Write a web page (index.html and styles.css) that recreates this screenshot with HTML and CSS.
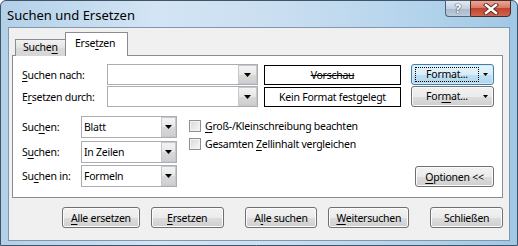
FILE: index.html
```html
<!DOCTYPE html>
<html lang="de">
<head>
    <meta charset="UTF-8">
    <title>Suchen und Ersetzen</title>
    <link rel="stylesheet" href="styles.css">
</head>
<body>
    <div class="window">
        <div class="titlebar">
            <span class="title">Suchen und Ersetzen</span>
            <div class="caption">
                <span class="cap-help">?</span>
                <span class="cap-close">
                    <svg width="16" height="12" viewBox="0 0 16 12">
                        <path d="M3 2 L13 10 M13 2 L3 10" stroke="#5a2a22" stroke-width="4.2" stroke-linecap="square"/>
                        <path d="M3 2 L13 10 M13 2 L3 10" stroke="#fff" stroke-width="2.4" stroke-linecap="square"/>
                    </svg>
                </span>
            </div>
        </div>

        <div class="client">
            <div class="tabs">
                <div class="tab">Suche<u>n</u></div>
                <div class="tab active">Erse<u>t</u>zen</div>
            </div>

            <div class="panel">
                <!-- search / replace rows -->
                <div class="top-grid">
                    <label class="lbl"><u>S</u>uchen nach:</label>
                    <div class="combo">
                        <span class="combo-text"></span>
                        <span class="combo-btn"><svg width="7" height="4" viewBox="0 0 7 4"><polygon points="0,0 7,0 3.5,4" fill="#000"/></svg></span>
                    </div>
                    <div class="preview"><s>Vorschau</s></div>
                    <button class="btn split focused"><span class="focus-rect">Format...</span><svg class="arrow" width="5" height="3" viewBox="0 0 5 3"><polygon points="0,0 5,0 2.5,3" fill="#000"/></svg></button>

                    <label class="lbl">E<u>r</u>setzen durch:</label>
                    <div class="combo">
                        <span class="combo-text"></span>
                        <span class="combo-btn"><svg width="7" height="4" viewBox="0 0 7 4"><polygon points="0,0 7,0 3.5,4" fill="#000"/></svg></span>
                    </div>
                    <div class="preview">Kein Format festgelegt</div>
                    <button class="btn split"><span class="focus-rect plain">For<u>m</u>at...</span><svg class="arrow" width="5" height="3" viewBox="0 0 5 3"><polygon points="0,0 5,0 2.5,3" fill="#000"/></svg></button>
                </div>

                <!-- options -->
                <div class="lower">
                    <label class="lbl">Suc<u>h</u>en:</label>
                    <div class="select">
                        <span class="select-text">Blatt</span>
                        <span class="select-btn"><svg width="7" height="4" viewBox="0 0 7 4"><polygon points="0,0 7,0 3.5,4" fill="#000"/></svg></span>
                    </div>

                    <div class="checks">
                        <div class="check"><span class="box"></span><span><u>G</u>roß-/Kleinschreibung beachten</span></div>
                        <div class="check"><span class="box"></span><span>Gesamten <u>Z</u>ellinhalt vergleichen</span></div>
                    </div>

                    <button class="btn options"><u>O</u>ptionen &lt;&lt;</button>

                    <label class="lbl">S<u>u</u>chen:</label>
                    <div class="select">
                        <span class="select-text">In Zeilen</span>
                        <span class="select-btn"><svg width="7" height="4" viewBox="0 0 7 4"><polygon points="0,0 7,0 3.5,4" fill="#000"/></svg></span>
                    </div>

                    <label class="lbl">Su<u>c</u>hen in:</label>
                    <div class="select">
                        <span class="select-text">Formeln</span>
                        <span class="select-btn"><svg width="7" height="4" viewBox="0 0 7 4"><polygon points="0,0 7,0 3.5,4" fill="#000"/></svg></span>
                    </div>
                </div>
            </div>

            <div class="footer">
                <button class="btn w-alle-ersetzen"><u>A</u>lle ersetzen</button>
                <button class="btn w-ersetzen"><u>E</u>rsetzen</button>
                <button class="btn w-alle-suchen">A<u>l</u>le suchen</button>
                <button class="btn w-weiter"><u>W</u>eitersuchen</button>
                <button class="btn w-schliessen">Schließen</button>
            </div>
        </div>
    </div>
</body>
</html>
```

FILE: styles.css
```css
* {
    box-sizing: border-box;
}

body {
    margin: 0;
    font-family: "Noto Sans", "Open Sans", sans-serif;
    font-size: 10.5px;
    letter-spacing: -0.25px;
    color: #000;
}

u {
    text-decoration-thickness: 1px;
    text-underline-offset: 2px;
}

.window {
    width: 518px;
    height: 246px;
    display: flex;
    flex-direction: column;
    padding: 0 7px 4px 7px;
    border: 1px solid #3f5468;
    border-radius: 6px 6px 0 0;
    background: linear-gradient(90deg, #b3d0e9 0%, #d3e5f4 30%, #c9def0 55%, #b4d4ec 80%, #9fc8e5 100%);
}

.titlebar {
    height: 26px;
    display: flex;
    align-items: flex-start;
    flex: none;
}

.title {
    margin-top: 5px;
    margin-left: -1px;
    font-size: 13px;
    letter-spacing: 0;
    color: #000;
}

.caption {
    display: flex;
    margin-left: auto;
    margin-top: -1px;
    margin-right: -1px;
}

.cap-help {
    width: 25px;
    height: 17px;
    border: 1px solid #4f6277;
    border-right: none;
    border-radius: 0 0 0 4px;
    background: linear-gradient(#e4eaf1, #c5d1de 50%, #a9bacc 51%, #bccadb);
    color: #fff;
    font-weight: bold;
    font-size: 13px;
    line-height: 15px;
    text-align: center;
    text-shadow: 0 0 1px #3d4d5e, 0 0 1px #3d4d5e, 0 0 1px #3d4d5e;
}

.cap-close {
    width: 41px;
    height: 17px;
    display: flex;
    align-items: center;
    justify-content: center;
    border: 1px solid #4a2a26;
    border-radius: 0 0 4px 0;
    background: linear-gradient(#e9a899, #d67a67 45%, #c2422d 50%, #d0674f);
}

.client {
    flex: 1;
    display: flex;
    flex-direction: column;
    padding: 0 6px 0 3px;
    background: #f0f0f0;
    border: 1px solid #8297ad;
}

.tabs {
    display: flex;
    align-items: flex-end;
    height: 28px;
    padding-left: 3px;
    margin-bottom: -1px;
    position: relative;
    z-index: 1;
}

.tab {
    height: 17px;
    width: 50px;
    padding-left: 7px;
    line-height: 15px;
    border: 1px solid #898c95;
    border-bottom: none;
    border-right: none;
    background: linear-gradient(#f2f2f2, #e3e3e3 50%, #dadada 51%, #d6d6d6);
}

.tab.active {
    height: 24px;
    width: 63px;
    padding-left: 9px;
    line-height: 20px;
    border-right: 1px solid #898c95;
    background: #fff;
}

.panel {
    border: 1px solid #898c95;
    background: #fff;
    padding: 8px 8px 10px 9px;
}

.top-grid {
    display: grid;
    grid-template-columns: 85px 151px 143px 93px;
    grid-template-rows: 21px 21px;
    row-gap: 1px;
    align-items: center;
}

.lbl {
    white-space: nowrap;
}

.combo {
    height: 21px;
    display: flex;
    border: 1px solid #abadb3;
    background: #fff;
}

.combo-text {
    flex: 1;
}

.combo-btn,
.select-btn {
    display: flex;
    align-items: center;
    justify-content: center;
    border: 1px solid #c5c8ce;
    background: linear-gradient(#f3f3f3, #e6e6e6 50%, #d9d9d9 51%, #cfcfcf);
}

.combo-btn {
    width: 19px;
}

.preview {
    height: 20px;
    margin-left: 6px;
    border: 1px solid #000;
    text-align: center;
    line-height: 18px;
    white-space: nowrap;
}

.btn {
    height: 21px;
    padding: 0;
    font-family: inherit;
    font-size: 10.5px;
    letter-spacing: -0.25px;
    color: #000;
    border: 1px solid #707070;
    border-radius: 3px;
    background: linear-gradient(#f2f2f2, #ebebeb 50%, #dddddd 51%, #cfcfcf);
    box-shadow: inset 0 0 0 1px #fbfbfb;
    white-space: nowrap;
}

.btn.split {
    margin-left: 10px;
    display: flex;
    align-items: center;
    padding: 0 3px 0 3px;
}

.btn.focused {
    border-color: #3c7fb1;
    background: linear-gradient(#e7f3fa, #d9edf8 50%, #bfe0f3 51%, #b0d6ec);
    box-shadow: inset 0 0 0 1px #d4ebf8;
}

.focus-rect {
    flex: 1;
    height: 15px;
    line-height: 13px;
    border: 1px dotted #000;
    text-align: center;
}

.focus-rect.plain {
    border-color: transparent;
}

.arrow {
    margin: 0 2px 0 4px;
}

.lower {
    margin-top: 9px;
    display: grid;
    grid-template-columns: 59px 96px 1fr 79px;
    grid-template-rows: 22px 22px 22px;
    row-gap: 2.5px;
    align-items: center;
}

.lower .lbl {
    grid-column: 1;
}

.lower .select {
    grid-column: 2;
}

.select {
    height: 22px;
    display: flex;
    border: 1px solid #abadb3;
    background: #fff;
}

.select-text {
    flex: 1;
    padding-left: 2px;
    line-height: 20px;
}

.select-btn {
    width: 15px;
}

.checks {
    grid-column: 3;
    grid-row: 1 / 4;
    align-self: start;
    padding: 3px 0 0 12px;
    display: flex;
    flex-direction: column;
    gap: 5px;
}

.check {
    display: flex;
    align-items: center;
    gap: 4px;
    height: 13px;
}

.box {
    width: 12px;
    height: 12px;
    border: 1px solid #8f8f8f;
    background: linear-gradient(135deg, #d8d8d8, #f8f8f8);
    box-shadow: inset 0 0 0 1px #f4f4f4;
}

.btn.options {
    grid-column: 4;
    grid-row: 3;
    align-self: end;
}

.footer {
    display: flex;
    padding-left: 50px;
    margin-top: 9px;
}

.w-alle-ersetzen { width: 78px; }
.w-ersetzen { width: 73px; margin-left: 11px; }
.w-alle-suchen { width: 73px; margin-left: 21px; }
.w-weiter { width: 81px; margin-left: 11px; }
.w-schliessen { width: 73px; margin-left: 21px; }
```
